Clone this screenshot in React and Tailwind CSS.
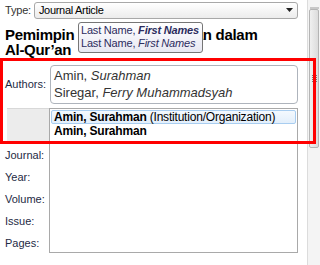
import React from "react";

const ui = { fontFamily: '"Liberation Sans", Arial, sans-serif' };

function FieldLabel({ children }) {
  return <div className="h-[22px] flex items-center text-[11px] text-[#1e2a44]">{children}</div>;
}

export default function App() {
  return (
    <div className="relative w-[320px] h-[265px] overflow-hidden bg-white" style={ui}>
      <div className="flex h-full">
        {/* main pane */}
        <div className="flex-1 flex flex-col pl-[5px] pr-[9px]">
          {/* type row */}
          <div className="flex items-center h-[18px] mt-[1px] gap-[3px]">
            <span className="text-[11px] text-[#333] tracking-[-0.2px]">Type:</span>
            <div className="flex-1 h-[17px] flex items-center justify-between border border-[#a8a8a8] rounded-[3px] bg-gradient-to-b from-white to-[#ececec] px-[4px]">
              <span className="text-[11px] text-black tracking-[-0.3px]">Journal Article</span>
              <svg width="7" height="4" viewBox="0 0 7 4"><path d="M0 0h7L3.5 4z" fill="#222" /></svg>
            </div>
          </div>

          {/* title */}
          <div className="mt-[8px] text-[15px] font-bold leading-[15px] tracking-[-0.3px] text-black whitespace-nowrap">
            Pemimpin dan Kepemimpinan dalam
            <br />
            Al-Qur’an
          </div>

          {/* authors */}
          <div className="mt-[8px] flex items-center">
            <span className="w-[45px] text-[11px] text-[#1e2a44]">Authors:</span>
            <div className="flex-1 h-[39px] border border-[#aeb4bc] rounded-[4px] px-[3px] pt-[1px] text-[13px] leading-[17px] text-[#333]">
              <div>
                Amin, <i>Surahman</i>
              </div>
              <div>
                Siregar, <i>Ferry Muhammadsyah</i>
              </div>
            </div>
          </div>

          {/* lower rows */}
          <div className="mt-[3px] flex flex-1">
            <div className="w-[44px] flex flex-col">
              <div className="h-[33px] mt-[1px] ml-[2px] bg-[#ececec] border-t border-[#d8d8d8]" />
              <div className="mt-[3px]">
                <FieldLabel>Journal:</FieldLabel>
                <FieldLabel>Year:</FieldLabel>
                <FieldLabel>Volume:</FieldLabel>
                <FieldLabel>Issue:</FieldLabel>
                <FieldLabel>Pages:</FieldLabel>
              </div>
            </div>
            <div className="w-[4px] flex flex-col pt-[4px]">
              <div className="h-[24px] w-[5px] border border-[#bbb] rounded-[2px] bg-white" />
            </div>
          </div>
        </div>

        {/* scrollbar */}
        <div className="w-[13px] flex flex-col border-l border-[#dcdcdc] bg-[#f4f4f4]">
          <div className="h-[9px] flex items-end justify-center">
            <div className="w-[9px] h-[2px] bg-[#c8c8c8]" />
          </div>
          <div className="h-[139px] mx-[1px] border border-[#b4b4b4] rounded-[2px] bg-gradient-to-r from-[#f0f0f0] to-[#dcdcdc] flex items-center justify-center">
            <div className="flex flex-col gap-[1px]">
              <div className="w-[5px] h-[1px] bg-[#777]" />
              <div className="w-[5px] h-[1px] bg-[#777]" />
              <div className="w-[5px] h-[1px] bg-[#777]" />
              <div className="w-[5px] h-[1px] bg-[#777]" />
            </div>
          </div>
        </div>
      </div>

      {/* autocomplete popup */}
      <div className="absolute left-[49px] top-[108px] w-[249px] h-[145px] bg-white border border-[#a9a9a9] p-[1px] text-[12px] tracking-[-0.2px] text-black">
        <div className="h-[14px] flex items-center px-[2px] rounded-[2px] border border-[#a8cdf0] bg-gradient-to-b from-[#f4f9fe] to-[#e3effb] whitespace-nowrap">
          <b>Amin, Surahman</b>&nbsp;(Institution/Organization)
        </div>
        <div className="h-[13px] flex items-center px-[3px]">
          <b>Amin, Surahman</b>
        </div>
      </div>

      {/* tooltip */}
      <div className="absolute left-[78px] top-[22px] w-[125px] h-[31px] bg-gradient-to-b from-white to-[#e8e8f2] border border-[#767676] rounded-[3px] px-[2px] pt-[1px] text-[11px] leading-[13px] tracking-[-0.2px] text-[#2c2c5e] whitespace-nowrap">
        <div>
          Last Name, <b className="italic">First Names</b>
        </div>
        <div>
          Last Name, <i>First Names</i>
        </div>
      </div>

      {/* red annotation box */}
      <div className="absolute left-[0px] top-[58px] w-[316px] h-[86px] border-[3px] border-[#ff0000]" />
    </div>
  );
}
